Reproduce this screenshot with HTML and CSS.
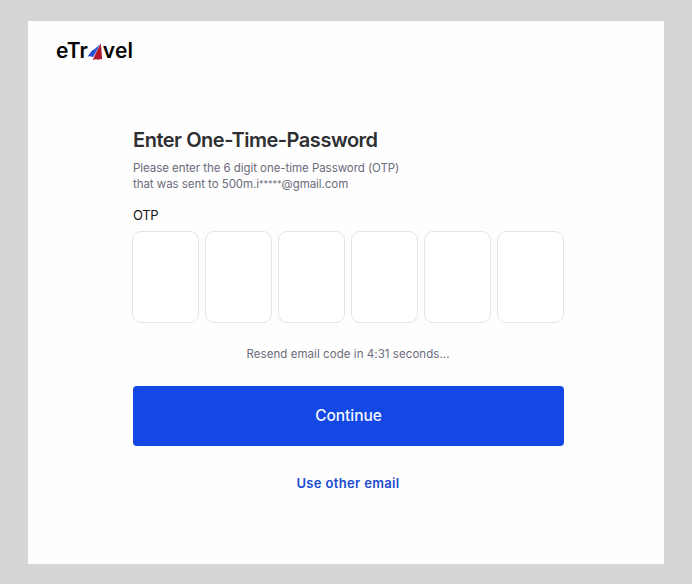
FILE: index.html
```html
<!DOCTYPE html>
<html lang="en">
<head>
<meta charset="utf-8">
<title>eTravel</title>
<link rel="stylesheet" href="styles.css">
</head>
<body>
<main class="card">
  <header class="logo">
    <span class="logo-start">eTr</span>
    <svg class="logo-mark" width="18" height="18" viewBox="0 0 18 18" aria-hidden="true">
      <path d="M14.6 0.6 L12.2 3 Q9 6 5.5 8 L1.6 13.6 Q4.5 12.8 7 14.2 L14.6 0.6Z" fill="#2450d6"/>
      <path d="M14.9 0.6 L16.2 16.4 Q14.5 15.2 12.4 16.8 Q10 15.4 6.8 17 L9.6 10.6 Z" fill="#b3182c"/>
    </svg>
    <span class="logo-end">vel</span>
  </header>
  <section class="content">
    <h1 class="title">Enter One-Time-Password</h1>
    <p class="hint">Please enter the 6 digit one-time Password (OTP)<br>that was sent to 500m.i<span class="mask">*****</span>@gmail.com</p>
    <label class="label" for="otp1">OTP</label>
    <div class="otp">
      <input class="digit" id="otp1" maxlength="1">
      <input class="digit" maxlength="1">
      <input class="digit" maxlength="1">
      <input class="digit" maxlength="1">
      <input class="digit" maxlength="1">
      <input class="digit" maxlength="1">
    </div>
    <p class="resend">Resend email code in 4:31 seconds...</p>
    <button class="continue" type="button">Continue</button>
    <a class="other">Use other email</a>
  </section>
</main>
</body>
</html>
```
FILE: styles.css
```css
* { box-sizing: border-box; }
body {
  margin: 0;
  height: 584px;
  padding: 21px 28px 20px;
  background: #d5d5d5;
  font-family: Inter, "Liberation Sans", sans-serif;
  overflow: hidden;
}
.card {
  height: 543px;
  background: #fefefe;
  padding-top: 18px;
}
.logo {
  display: flex;
  align-items: center;
  height: 24px;
  margin-left: 28px;
  font-size: 21px;
  line-height: 24px;
  font-weight: 600;
  color: #050505;
}
.logo-start { letter-spacing: 0; }
.logo-mark { margin: 1px 0 0 -2px; }
.logo-end { letter-spacing: 0.2px; margin-left: -1px; }
.content {
  width: 432px;
  margin: 64px 0 0 104px;
}
.title {
  margin: 0 0 0 1px;
  font-size: 20px;
  line-height: 26px;
  font-weight: 600;
  letter-spacing: -0.48px;
  color: #2f2f32;
  white-space: nowrap;
}
.hint {
  margin: 7px 0 0 1px;
  font-size: 11.5px;
  line-height: 16px;
  letter-spacing: -0.05px;
  color: #6b6b7b;
  white-space: nowrap;
}
.mask {
  font-size: 9.2px;
  line-height: 0;
  letter-spacing: -0.1px;
  vertical-align: 1.5px;
}
.label {
  display: block;
  margin: 15px 0 0 1px;
  height: 16px;
  font-size: 13px;
  line-height: 16px;
  letter-spacing: -0.4px;
  color: #161616;
}
.otp {
  display: flex;
  gap: 6px;
  margin-top: 8px;
}
.digit {
  width: 67px;
  height: 92px;
  padding: 0;
  border: 1px solid #e5e5e5;
  border-radius: 9px;
  background: #fff;
  text-align: center;
  font: inherit;
}
.resend {
  margin: 23px 0 0;
  font-size: 11.5px;
  line-height: 16px;
  letter-spacing: 0.06px;
  text-align: center;
  color: #6b6b7b;
}
.continue {
  display: block;
  width: 431px;
  height: 60px;
  margin: 24px 0 0 1px;
  padding: 0;
  border: 0;
  border-radius: 4px;
  background: #1348e5;
  color: #f4f7ff;
  font: 500 15.5px/20px Inter, "Liberation Sans", sans-serif;
  letter-spacing: -0.05px;
}
.other {
  display: block;
  margin-top: 28px;
  font-size: 13px;
  line-height: 18px;
  font-weight: 600;
  letter-spacing: 0.35px;
  text-align: center;
  color: #1b4bd0;
}
```
